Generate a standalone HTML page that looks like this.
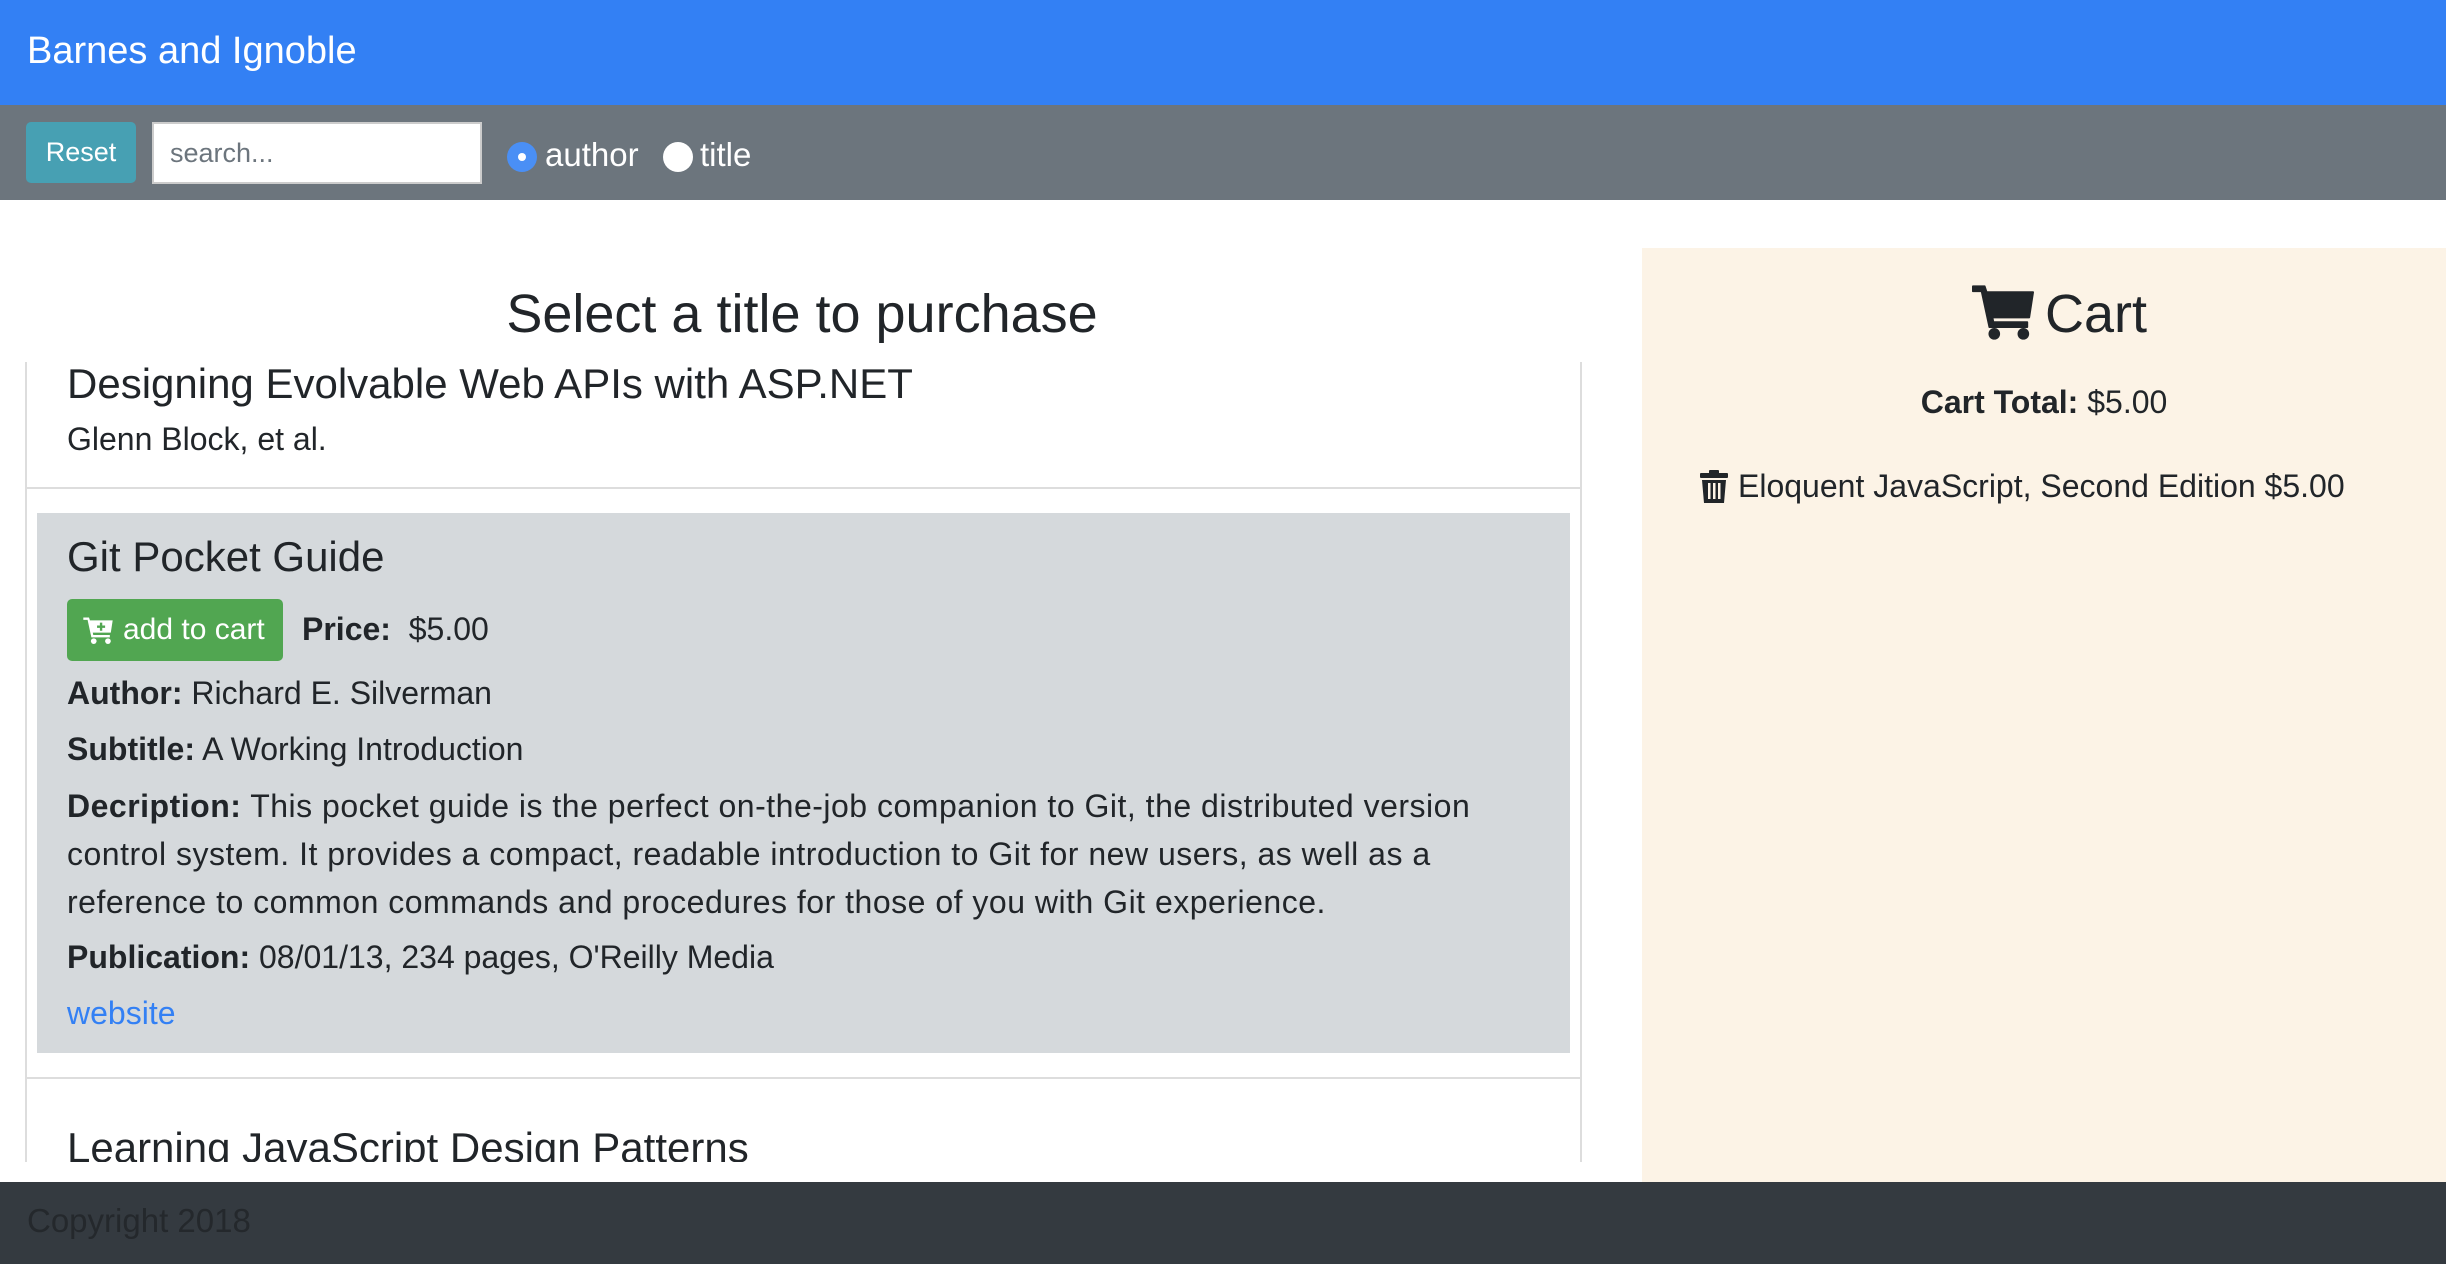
<!DOCTYPE html>
<html><head><meta charset="utf-8"><style>
*{margin:0;padding:0;box-sizing:border-box}
body{width:2446px;height:1264px;position:relative;overflow:hidden;background:#fff;font-family:"Liberation Sans",sans-serif;color:#212529;font-size:25px}
.a{position:absolute;white-space:nowrap}
b{font-weight:bold}
</style></head><body>
<div class="a" style="left:0;top:0;width:2446px;height:105px;background:#3380f4"></div>
<div class="a" style="left:27px;top:29px;color:#fff;font-size:38px;line-height:44px">Barnes and Ignoble</div>
<div class="a" style="left:0;top:105px;width:2446px;height:95px;background:#6c757d"></div>
<div class="a" style="left:26px;top:122px;width:110px;height:61px;background:#47a0b3;border-radius:5px;color:#fff;font-size:27px;line-height:61px;text-align:center">Reset</div>
<div class="a" style="left:152px;top:122px;width:330px;height:62px;background:#fff;border:2px solid #ccc;color:#6c757d;font-size:27px;line-height:58px;padding-left:16px">search...</div>
<div class="a" style="left:507px;top:142px;width:30px;height:30px;border-radius:50%;background:#4a8ff5"></div>
<div class="a" style="left:518px;top:153px;width:8px;height:8px;border-radius:50%;background:#fff"></div>
<div class="a" style="left:545px;top:134px;color:#fff;font-size:33px;line-height:42px">author</div>
<div class="a" style="left:663px;top:142px;width:30px;height:30px;border-radius:50%;background:#fff"></div>
<div class="a" style="left:700px;top:134px;color:#fff;font-size:33px;line-height:42px">title</div>

<div class="a" style="left:0;top:280px;width:1604px;text-align:center;font-size:54px;line-height:68px;font-weight:500">Select a title to purchase</div>

<div class="a" style="left:25px;top:362px;width:1557px;height:800px;border-left:2px solid #ddd;border-right:2px solid #ddd;overflow:hidden">
 <div class="a" style="left:40px;top:-3px;font-size:42px;line-height:50px">Designing Evolvable Web APIs with ASP.NET</div>
 <div class="a" style="left:40px;top:58px;font-size:32px;line-height:38px">Glenn Block, et al.</div>
 <div class="a" style="left:0;top:125px;width:1557px;height:2px;background:#ddd"></div>
 <div class="a" style="left:10px;top:151px;width:1533px;height:540px;background:#d5d9dc"></div>
 <div class="a" style="left:40px;top:170px;font-size:42px;line-height:50px">Git Pocket Guide</div>
 <div class="a" style="left:40px;top:237px;width:216px;height:62px;background:#51a651;border-radius:5px;color:#fff;font-size:30px;line-height:62px;padding-left:56px">add to cart</div>
 <svg class="a" style="left:55px;top:255px" width="32" height="27" viewBox="0 0 64 57"><path d="M1 1h12l2 6h48l-4 26H21l1 5h35v5H18L10 6H1z" fill="#fff"/><circle cx="23" cy="51" r="6" fill="#fff"/><circle cx="53" cy="51" r="6" fill="#fff"/><path d="M36 12h5v6h6v5h-6v6h-5v-6h-6v-5h6z" fill="#51a651"/></svg>
 <div class="a" style="left:275px;top:247px;font-size:32px;line-height:40px"><b>Price:</b>&nbsp; $5.00</div>
 <div class="a" style="left:40px;top:312px;font-size:32px;line-height:38px"><b>Author:</b> Richard E. Silverman</div>
 <div class="a" style="left:40px;top:368px;font-size:32px;line-height:38px"><b>Subtitle:</b> A Working Introduction</div>
 <div class="a" style="left:40px;top:420px;font-size:32px;line-height:48px;letter-spacing:0.5px"><b>Decription:</b> This pocket guide is the perfect on-the-job companion to Git, the distributed version<br>control system. It provides a compact, readable introduction to Git for new users, as well as a<br>reference to common commands and procedures for those of you with Git experience.</div>
 <div class="a" style="left:40px;top:576px;font-size:32px;line-height:38px"><b>Publication:</b> 08/01/13, 234 pages, O'Reilly Media</div>
 <div class="a" style="left:40px;top:632px;font-size:32px;line-height:38px;color:#3380f4">website</div>
 <div class="a" style="left:0;top:715px;width:1557px;height:2px;background:#ddd"></div>
 <div class="a" style="left:40px;top:761px;font-size:42px;line-height:50px">Learning JavaScript Design Patterns</div>
</div>

<div class="a" style="left:1642px;top:248px;width:804px;height:934px;background:#fcf3e6"></div>
<svg class="a" style="left:1972px;top:285px" width="62" height="56" viewBox="0 0 64 57"><path d="M1 1h12l2 6h48l-4 26H21l1 5h35v5H18L10 6H1z" fill="#212529" stroke="#212529" stroke-width="2" stroke-linejoin="round"/><circle cx="23" cy="50" r="6" fill="#212529"/><circle cx="53" cy="50" r="6" fill="#212529"/></svg>
<div class="a" style="left:2045px;top:280px;font-size:54px;line-height:68px;font-weight:500">Cart</div>
<div class="a" style="left:1642px;top:382px;width:804px;text-align:center;font-size:32px;line-height:40px"><b>Cart Total:</b> $5.00</div>
<svg class="a" style="left:1700px;top:470px" width="28" height="33" viewBox="0 0 28 33"><rect x="9" y="0" width="10" height="4" rx="1" fill="#212529"/><rect x="0" y="3" width="28" height="5" rx="1" fill="#212529"/><path d="M2 10h24l-2 23H4z" fill="#212529"/><rect x="8" y="13" width="2.5" height="16" fill="#fcf3e6"/><rect x="13" y="13" width="2.5" height="16" fill="#fcf3e6"/><rect x="18" y="13" width="2.5" height="16" fill="#fcf3e6"/></svg>
<div class="a" style="left:1738px;top:466px;font-size:32px;line-height:40px">Eloquent JavaScript, Second Edition $5.00</div>

<div class="a" style="left:0;top:1182px;width:2446px;height:82px;background:#343a40"></div>
<div class="a" style="left:27px;top:1200px;font-size:33px;line-height:42px;color:#24282c">Copyright 2018</div>
</body></html>
